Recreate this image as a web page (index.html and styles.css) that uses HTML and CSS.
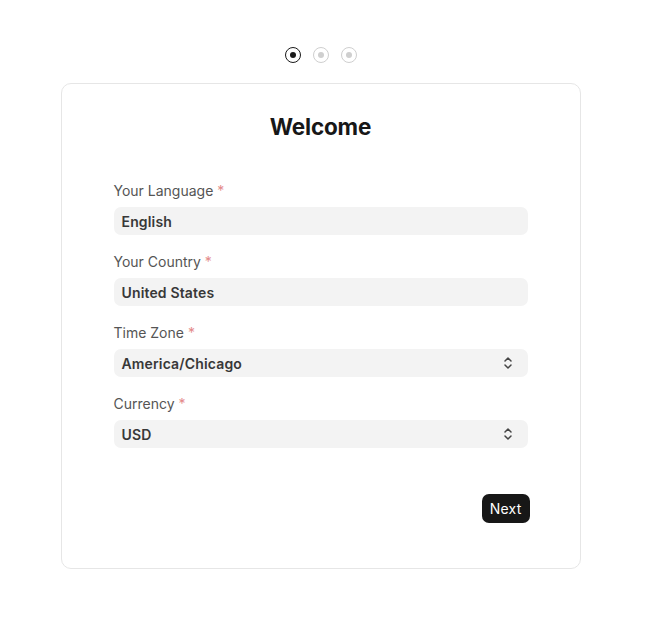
FILE: index.html
```html
<!DOCTYPE html>
<html>
<head>
<meta charset="utf-8">
<link rel="stylesheet" href="styles.css">
</head>
<body>
<div class="page">
  <div class="steps">
    <span class="dot active"><span class="inner"></span></span>
    <span class="dot"><span class="inner"></span></span>
    <span class="dot"><span class="inner"></span></span>
  </div>
  <div class="card">
    <h1 class="title">Welcome</h1>
    <div class="fields">
      <div class="field">
        <label class="label">Your Language <span class="req">*</span></label>
        <div class="input">English</div>
      </div>
      <div class="field">
        <label class="label">Your Country <span class="req">*</span></label>
        <div class="input">United States</div>
      </div>
      <div class="field">
        <label class="label">Time Zone <span class="req">*</span></label>
        <div class="input select">America/Chicago
          <svg class="chev" width="10" height="14" viewBox="0 0 10 14"><path d="M2 5 L5 2 L8 5 M2 9 L5 12 L8 9" fill="none" stroke="#444" stroke-width="1.5" stroke-linecap="round" stroke-linejoin="round"/></svg>
        </div>
      </div>
      <div class="field">
        <label class="label">Currency <span class="req">*</span></label>
        <div class="input select">USD
          <svg class="chev" width="10" height="14" viewBox="0 0 10 14"><path d="M2 5 L5 2 L8 5 M2 9 L5 12 L8 9" fill="none" stroke="#444" stroke-width="1.5" stroke-linecap="round" stroke-linejoin="round"/></svg>
        </div>
      </div>
    </div>
    <div class="actions">
      <button class="btn">Next</button>
    </div>
  </div>
</div>
</body>
</html>
```
FILE: styles.css
```css
* { box-sizing: border-box; }
html, body { margin: 0; padding: 0; background: #fff; }
body { font-family: Inter, "Noto Sans", sans-serif; color: #1f1f1f; }
.page { width: 651px; padding-top: 47px; display: flex; flex-direction: column; align-items: center; }
.steps { display: flex; gap: 12px; margin-left: -9px; }
.dot { width: 16px; height: 16px; border-radius: 50%; border: 1px solid #cfcfcf; display: flex; align-items: center; justify-content: center; }
.dot .inner { width: 6px; height: 6px; border-radius: 50%; background: #cfcfcf; }
.dot.active { border-color: #1a1a1a; }
.dot.active .inner { background: #1a1a1a; }
.card { margin-top: 20px; margin-left: -10px; width: 520px; height: 486px; border: 1px solid #e6e6e6; border-radius: 10px; padding: 28px 52px 0 52px; }
.title { margin: 0; text-align: center; font-size: 22.5px; font-weight: 700; color: #171717; letter-spacing: -0.2px; line-height: 30px; }
.fields { margin-top: 39px; display: flex; flex-direction: column; gap: 17px; }
.field { display: flex; flex-direction: column; gap: 6px; }
.label { font-size: 14px; color: #555; line-height: 20px; }
.req { color: #e48a8a; }
.input { height: 28px; width: 414px; background: #f3f3f3; border-radius: 7px; padding: 0 8px; font-size: 14px; font-weight: 600; color: #383838; letter-spacing: 0.15px; display: flex; align-items: center; justify-content: space-between; }
.chev { margin-right: 7px; }
.actions { display: flex; justify-content: flex-end; margin-top: 46px; margin-right: -2px; }
.btn { font-family: inherit; background: #171717; color: #fff; border: 0; border-radius: 7px; height: 29px; padding: 0 8px; font-size: 14px; font-weight: 400; letter-spacing: 0.2px; }
```
